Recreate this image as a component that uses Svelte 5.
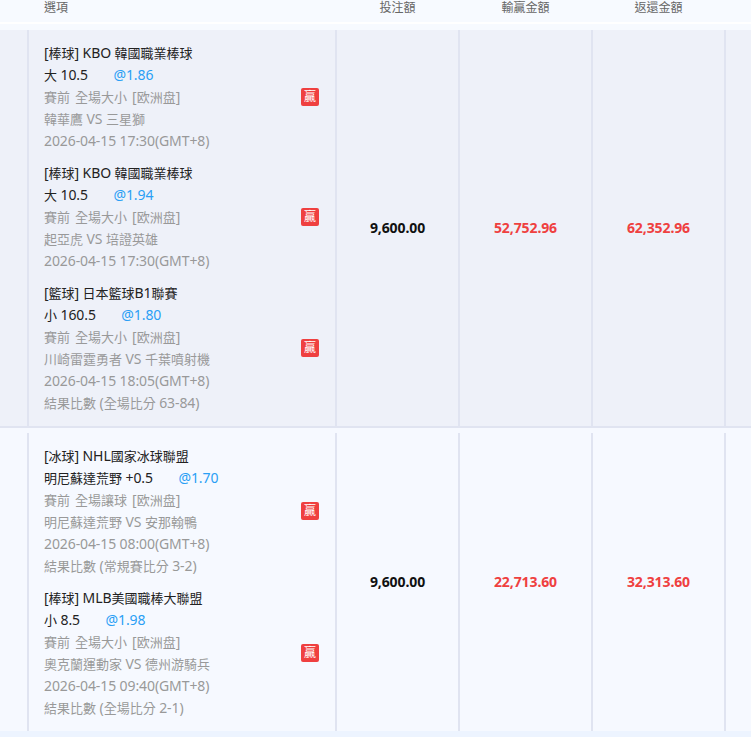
<script>
	const rows = [
		{
			stake: '9,600.00',
			win: '52,752.96',
			ret: '62,352.96',
			bets: [
				{ league: '[棒球] KBO 韓國職業棒球', pick: '大 10.5', odds: '@1.86', market: '賽前 全場大小 [欧洲盘]', teams: '韓華鷹 VS 三星獅', time: '2026-04-15 17:30(GMT+8)' },
				{ league: '[棒球] KBO 韓國職業棒球', pick: '大 10.5', odds: '@1.94', market: '賽前 全場大小 [欧洲盘]', teams: '起亞虎 VS 培證英雄', time: '2026-04-15 17:30(GMT+8)' },
				{ league: '[籃球] 日本籃球B1聯賽', pick: '小 160.5', odds: '@1.80', market: '賽前 全場大小 [欧洲盘]', teams: '川崎雷霆勇者 VS 千葉噴射機', time: '2026-04-15 18:05(GMT+8)', score: '結果比數 (全場比分 63-84)' }
			]
		},
		{
			stake: '9,600.00',
			win: '22,713.60',
			ret: '32,313.60',
			bets: [
				{ league: '[冰球] NHL國家冰球聯盟', pick: '明尼蘇達荒野 +0.5', odds: '@1.70', market: '賽前 全場讓球 [欧洲盘]', teams: '明尼蘇達荒野 VS 安那翰鴨', time: '2026-04-15 08:00(GMT+8)', score: '結果比數 (常規賽比分 3-2)' },
				{ league: '[棒球] MLB美國職棒大聯盟', pick: '小 8.5', odds: '@1.98', market: '賽前 全場大小 [欧洲盘]', teams: '奧克蘭運動家 VS 德州游騎兵', time: '2026-04-15 09:40(GMT+8)', score: '結果比數 (全場比分 2-1)' }
			]
		}
	];

	// han characters run a point smaller than latin in these rows
	const runs = (text) => text.split(/([\u4e00-\u9fff]+)/).filter(Boolean);
	const isHan = (s) => /[\u4e00-\u9fff]/.test(s);
</script>

{#snippet mixed(text)}
	{#each runs(text) as r}<span class:han={isHan(r)}>{r}</span>{/each}
{/snippet}

<div class="page">
	<div class="grid head">
		<div></div>
		<div class="h-option">選項</div>
		<div class="h-num">投注額</div>
		<div class="h-num">輸贏金額</div>
		<div class="h-num">返還金額</div>
		<div></div>
	</div>
	<div class="head-gap"></div>

	{#each rows as row, i}
		<div class="grid row" class:alt={i === 1}>
			<div></div>
			<div class="cell bets">
				{#each row.bets as b}
					<div class="bet">
						<div class="info">
							<div class="dark">{@render mixed(b.league)}</div>
							<div class="dark">{@render mixed(b.pick)}<span class="odds">{b.odds}</span></div>
							<div class="market">{@render mixed(b.market)}</div>
							<div>{@render mixed(b.teams)}</div>
							<div>{b.time}</div>
							{#if b.score}<div>{@render mixed(b.score)}</div>{/if}
						</div>
						<span class="tag">贏</span>
					</div>
				{/each}
			</div>
			<div class="cell amount stake">{row.stake}</div>
			<div class="cell amount red">{row.win}</div>
			<div class="cell amount red">{row.ret}</div>
			<div class="cell"></div>
		</div>
		{#if i === 0}<div class="row-gap"></div>{/if}
	{/each}
	<div class="foot"></div>
</div>

<style>
	:global(body) {
		background: #fff;
		overflow: hidden;
	}
	.page {
		font-family: "Noto Sans", "Noto Sans CJK TC", sans-serif;
		font-size: 14px;
		line-height: 22px;
		letter-spacing: -0.1px;
		color: #999;
	}
	.han {
		font-size: 13px;
		line-height: 1;
		letter-spacing: 0;
	}
	.grid {
		display: grid;
		grid-template-columns: 27px 308px 123px 133px 133px 1fr;
	}
	.head {
		height: 22px;
		background: #f7faff;
		color: #666;
		font-size: 12px;
		line-height: 16px;
		letter-spacing: 0;
		border-bottom: 2px solid #fff;
	}
	.h-option { padding-left: 17px; }
	.h-num {
		padding-left: 2px;
		text-align: center;
	}
	.head-gap {
		height: 6px;
		background: #f7faff;
	}
	.row { background: #eef1f9; }
	.row.alt { background: #f6f9ff; }
	.cell { border-left: 2px solid #e0e4f1; }
	.bets {
		display: flex;
		flex-direction: column;
		gap: 10px;
		padding: 12px 16px 12px 15px;
	}
	.bet {
		display: flex;
		align-items: center;
		justify-content: space-between;
	}
	.dark { color: #222; }
	.market { word-spacing: 1.5px; }
	.odds {
		margin-left: 25.5px;
		color: #2a9ff5;
	}
	.tag {
		width: 18px;
		height: 18px;
		border-radius: 2px;
		background: #ef4040;
		color: #fff;
		font-size: 12px;
		line-height: 18px;
		text-align: center;
	}
	.amount {
		display: flex;
		align-items: center;
		justify-content: center;
		font-weight: 700;
	}
	.stake { color: #111; }
	.red { color: #ef4040; }
	.row-gap {
		height: 5px;
		background: #f6f9ff;
		border-top: 2px solid #e0e4f1;
	}
	.foot {
		height: 6px;
		background: #edf4ff;
	}
</style>
